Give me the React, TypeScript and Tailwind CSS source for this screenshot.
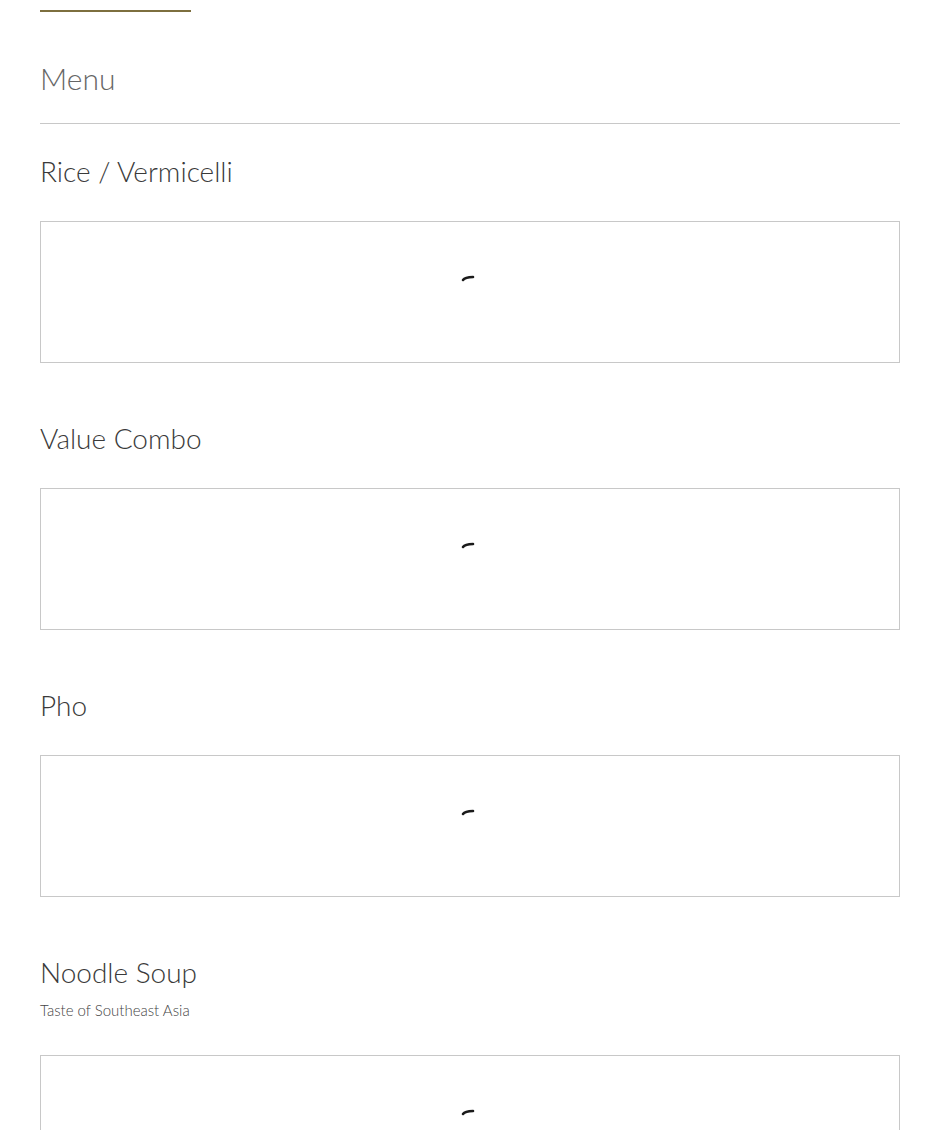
import React from 'react';

type Section = { title: string; subtitle?: string };

const SECTIONS: Section[] = [
  { title: 'Rice / Vermicelli' },
  { title: 'Value Combo' },
  { title: 'Pho' },
  { title: 'Noodle Soup', subtitle: 'Taste of Southeast Asia' },
];

function Loader() {
  return (
    <svg width="14" height="8" viewBox="0 0 14 8" className="text-[#1a1a1a]">
      <path d="M2 6 C3.5 4 7 3.2 12 3" fill="none" stroke="currentColor" strokeWidth="2.6" strokeLinecap="round" />
    </svg>
  );
}

function MenuSection({ title, subtitle, first }: Section & { first?: boolean }) {
  return (
    <section className={first ? 'mt-[29px]' : 'mt-[57px]'}>
      <h2 className="text-[28px] leading-[36px] font-light text-[#3a3a3a]">{title}</h2>
      {subtitle && (
        <p className="mt-[10px] text-[15px] leading-[20px] font-light text-[#444]">{subtitle}</p>
      )}
      <div
        className={`${subtitle ? 'mt-[35px]' : 'mt-[32px]'} h-[142px] border border-[#c8c8c8] flex justify-center pt-[52px]`}
      >
        <div className="h-[10px] -ml-[4px]">
          <Loader />
        </div>
      </div>
    </section>
  );
}

export default function App() {
  return (
    <div
      className="w-[925px] h-[1130px] overflow-hidden bg-white px-[40px] pr-[25px]"
      style={{ fontFamily: 'Lato, "Open Sans", sans-serif' }}
    >
      <div className="pt-[10px]">
        <div className="h-[2px] w-[151px] bg-[#7d6f3f]" />
      </div>
      <h1 className="mt-[46px] text-[30px] leading-[40px] font-light text-[#666]">Menu</h1>
      <div className="mt-[25px] h-px bg-[#c8c8c8]" />
      {SECTIONS.map((s, i) => (
        <MenuSection key={s.title} {...s} first={i === 0} />
      ))}
    </div>
  );
}
